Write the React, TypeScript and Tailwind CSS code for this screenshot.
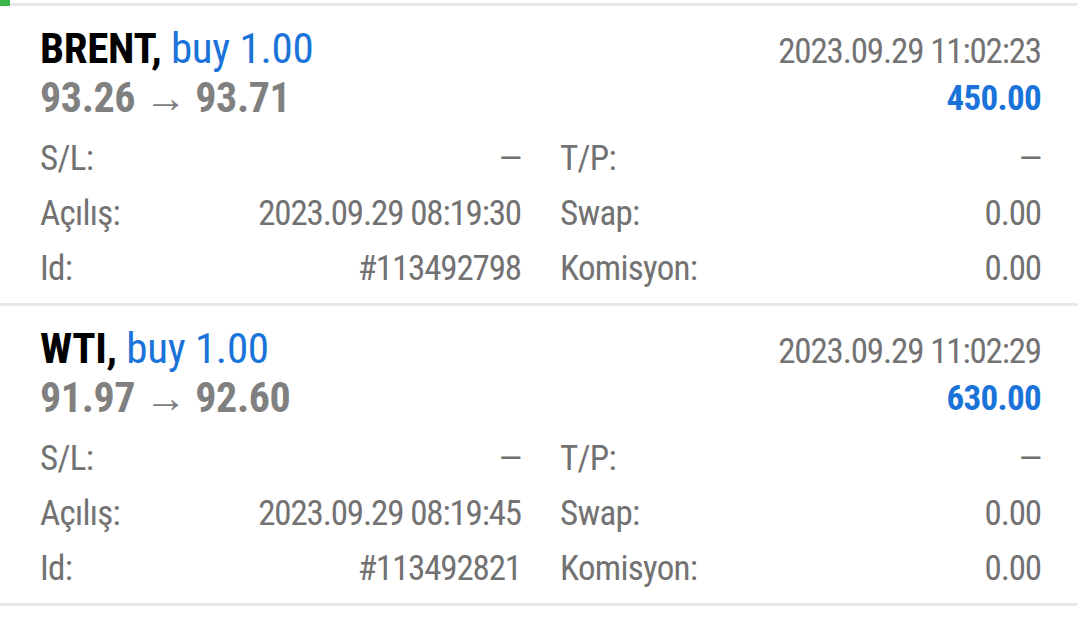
import React from "react";

type Trade = {
  sym: string;
  side: string;
  time: string;
  from: string;
  to: string;
  profit: string;
  open: string;
  id: string;
};

const trades: Trade[] = [
  { sym: "BRENT,", side: "buy 1.00", time: "2023.09.29 11:02:23", from: "93.26", to: "93.71", profit: "450.00", open: "2023.09.29 08:19:30", id: "#113492798" },
  { sym: "WTI,", side: "buy 1.00", time: "2023.09.29 11:02:29", from: "91.97", to: "92.60", profit: "630.00", open: "2023.09.29 08:19:45", id: "#113492821" },
];

function Row({ label, value }: { label: string; value: string }) {
  return (
    <div className="flex h-[55px] items-center justify-between">
      <span className="tracking-[-0.7px]">{label}</span>
      <span className="tracking-[-1.15px]">{value}</span>
    </div>
  );
}

function Card({ t }: { t: Trade }) {
  return (
    <div className="border-b-[3px] border-[#e8e8e8] pl-[40px] pr-[37px] pt-[18px] pb-[6px]">
      <div className="flex h-[48px] items-start justify-between leading-[48px]">
        <div className="text-[43px] tracking-[-0.3px]">
          <span className="font-bold text-black">{t.sym}</span>{" "}
          <span className="text-[#1a73d9]">{t.side}</span>
        </div>
        <div className="pt-[4px] text-[35px] tracking-[-1.15px] text-[#737373]">{t.time}</div>
      </div>
      <div className="flex h-[48px] items-end justify-between">
        <div className="text-[42px] font-bold leading-[44px] tracking-[-0.4px] text-[#808080]">
          {t.from} <span className="font-normal">→</span> {t.to}
        </div>
        <div className="text-[35px] font-bold leading-[42px] tracking-[-0.7px] text-[#1a73d9]">{t.profit}</div>
      </div>
      <div className="mt-[12px] grid grid-cols-2 gap-x-[39px] text-[35px] text-[#727272]">
        <div>
          <Row label="S/L:" value="—" />
          <Row label="Açılış:" value={t.open} />
          <Row label="Id:" value={t.id} />
        </div>
        <div>
          <Row label="T/P:" value="—" />
          <Row label="Swap:" value="0.00" />
          <Row label="Komisyon:" value="0.00" />
        </div>
      </div>
    </div>
  );
}

export default function App() {
  return (
    <div
      className="h-[630px] w-[1078px] overflow-hidden bg-white"
      style={{ fontFamily: '"Roboto Condensed", "Liberation Sans Narrow", Roboto, sans-serif' }}
    >
      <div className="relative h-[6px] border-b-[3px] border-[#e8e8e8]">
        <div className="absolute left-0 top-0 h-[6px] w-[10px] bg-[#3cb54a]" />
      </div>
      {trades.map((t) => (
        <Card key={t.id} t={t} />
      ))}
    </div>
  );
}
